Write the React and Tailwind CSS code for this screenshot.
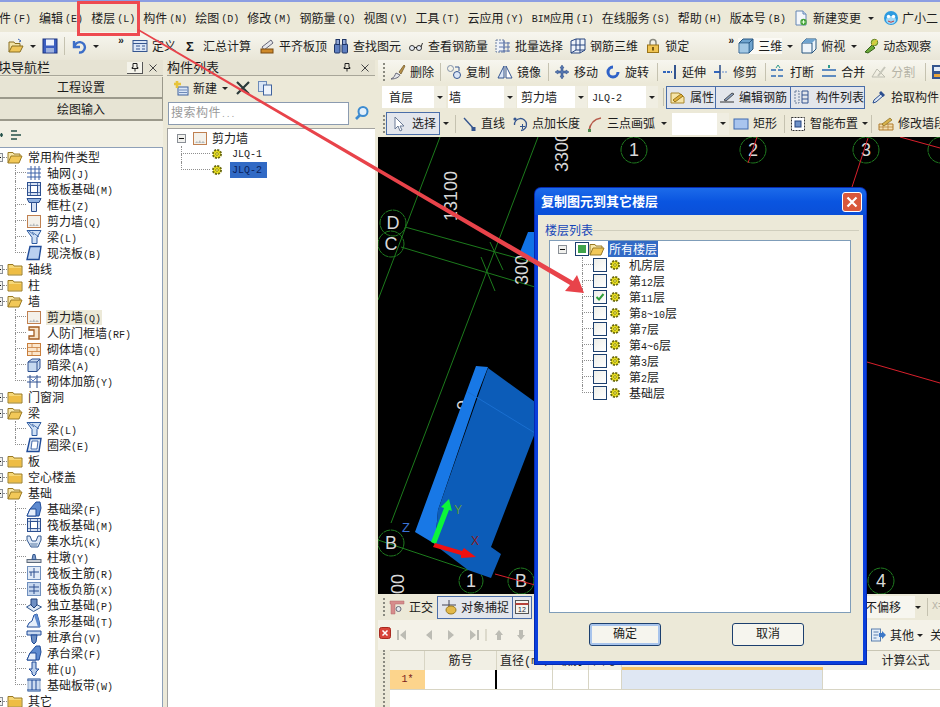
import React from "react";

// splits a label so latin runs get the half width size the screenshot has
function T({ children }) {
  return String(children)
    .split(/([\x00-\x7f]+)/)
    .map((part, i) =>
      /^[\x00-\x7f]+$/.test(part) ? (
        <span key={i} className="text-[10px]">{part}</span>
      ) : (
        part
      )
    );
}

function Ic({ children, w = 16 }) {
  return (
    <svg width={w} height="16" viewBox={`0 0 ${w} 16`} className="shrink-0 block">
      {children}
    </svg>
  );
}

const icons = {
  // tree
  folder: <><path d="M1 5V3.5h5L7 5h8v9H1z" fill="#f6d777" stroke="#9a7a24" /><path d="M2 7h12v6H2z" fill="#eebd45" /></>,
  folderOpen: <><path d="M1 14V3.5h5L7 5h6v2" fill="#f8e7a8" stroke="#9a7a24" /><path d="M1 14l3-7h11l-3 7z" fill="#f2c858" stroke="#9a7a24" /></>,
  gear: <><circle cx="8" cy="8" r="4" fill="#f3e81e" stroke="#6b6a10" strokeWidth="2" strokeDasharray="2 1.1" /><circle cx="8" cy="8" r="1.4" fill="#f7f060" stroke="#5b5a10" strokeWidth="0.6" /></>,
  wall: <><rect x="1.5" y="2.5" width="13" height="12" fill="#f4f1ea" stroke="#c08050" /><path d="M3 13l2-2 1 2 2-3 1 3 2-2 2 2z" fill="#9aa2a8" opacity=".7" /></>,
  grid: <path d="M5 1v14M9 1v14M13 1v14M1 4h14M1 8h14M1 12h14" stroke="#3c62a8" fill="none" />,
  raft: <><rect x="1.5" y="1.5" width="13" height="13" fill="#d5e1f3" stroke="#2c4f8f" /><rect x="4.5" y="4.5" width="7" height="7" fill="#fff" stroke="#2c4f8f" /><path d="M1 4.5h14M1 11.5h14M4.5 1v14M11.5 1v14" stroke="#2c4f8f" strokeWidth=".7" /></>,
  column: <><path d="M1 1.5h14l-2 4H3z" fill="#8fb1e0" stroke="#2c4f8f" /><path d="M5.5 5.5h5v9h-5z" fill="#d5e1f3" stroke="#2c4f8f" /></>,
  beam: <><path d="M1 1.5h14l-4 7v6H6v-6z" fill="#cfe0f5" stroke="#2c5aa0" /><path d="M6 3l7 5M3 2l5 4" stroke="#2c5aa0" strokeWidth=".8" /></>,
  slab: <path d="M4 1.5h11l-2 13H1z" fill="#b9d0f0" stroke="#1f4b98" strokeWidth="1.4" />,
  ring: <><path d="M4 1.5h11l-2 13H1z" fill="#dde8f7" stroke="#1f4b98" strokeWidth="1.4" /><path d="M6 4h6l-1 8H5z" fill="#fff" stroke="#1f4b98" strokeWidth=".8" /></>,
  door: <path d="M3 2h10v12H3v-3h5V5H3z" fill="#f6e3c8" stroke="#a35c20" strokeWidth="1.3" />,
  brick: <><rect x="1.5" y="2.5" width="13" height="12" fill="#fbe6cc" stroke="#c87e3c" /><path d="M1 6.5h14M1 10.5h14M6 2.5v4M11 6.5v4M6 10.5v4" stroke="#c87e3c" strokeWidth=".8" /></>,
  darkBeam: <><path d="M2 5l4-3h8v9l-3 3.5H2z" fill="#c5d8ef" stroke="#2c4f8f" /><path d="M2 5h9v9.5M11 5l3-3" fill="none" stroke="#2c4f8f" /></>,
  rebar: <><path d="M1 4h14M1 9h14M4 2v13M11 2v13" stroke="#2c4f8f" fill="none" /><path d="M5 6l2 2 3-3" stroke="#5a7fc0" fill="none" /></>,
  foundBeam: <><path d="M1 15l3-7 6-7h4l1 6-2 8z" fill="#5e8bd0" stroke="#1f4b98" /><path d="M4 8h6v7H1z" fill="#e5eefa" stroke="#1f4b98" /></>,
  pit: <><path d="M1 3h3l2 5h4l2-5h3v4l-3 7H5L1 7z" fill="#dde8f7" stroke="#33588f" /><path d="M4 10h8l-1 3H5z" fill="#9ab0cc" /></>,
  pier: <><rect x="1" y="10.5" width="14" height="3" fill="#c9ced6" stroke="#5c6a7c" /><path d="M6 10.5l1-5h2l1 5z" fill="#7f9ccb" stroke="#33588f" /></>,
  raftMain: <><rect x="1.5" y="1.5" width="13" height="13" fill="#e2ebf7" stroke="#6f8fbd" /><path d="M8 3v10M3 7h10M5 7v4" stroke="#2c4f8f" fill="none" /></>,
  raftNeg: <><rect x="1.5" y="1.5" width="13" height="13" fill="#c7d8ef" stroke="#6f8fbd" /><path d="M8 3v10M3 6h10M3 10h10" stroke="#2c4f8f" fill="none" /></>,
  isolated: <><path d="M0.5 10l7-4 8 4-8 4.5z" fill="#dfe9f6" stroke="#33588f" /><path d="M5 2h6v6l-3 3-3-3z" fill="#6e8fc3" stroke="#1f3f78" /></>,
  strip: <><path d="M1 14l2-4 3-2 2-6 3-1 2 7 1 6z" fill="#e5eefa" stroke="#1f4b98" /><path d="M8 2l3-1 2 7 1 6h-2l-2-6z" fill="#5e8bd0" /></>,
  cap: <><path d="M1 2h14v4H1z" fill="#c8d8ef" stroke="#1f4b98" /><path d="M5 6h6l-1 7-2 2-2-2z" fill="#6e8fc3" stroke="#1f4b98" /></>,
  pile: <><path d="M6 1h4v7h3l-3 3v2l-2 2-2-2v-2L3 8h3z" fill="#b8cdea" stroke="#1f4b98" /></>,
  band: <><rect x="2" y="1.5" width="12" height="13" fill="#cddcf0" stroke="#8ba4c8" /><path d="M1 3h14M1 13h14M6 3v10M10 3v10" stroke="#1f4b98" /></>,
  // top toolbar
  open: <><path d="M1 14V4h5l1 1.5h5V8" fill="#f2e3a6" stroke="#8a6f20" /><path d="M1 14l3-6h11l-3 6z" fill="#efc65a" stroke="#8a6f20" /><path d="M10 1l3 2-2 1" fill="none" stroke="#3c64b0" /></>,
  save: <><rect x="1" y="1" width="14" height="14" fill="#3d5fc0" stroke="#1d3580" /><rect x="4" y="1.5" width="8" height="6" fill="#eef2fb" /><rect x="4" y="10" width="8" height="4.5" fill="#9fb2de" /></>,
  undo: <path d="M3 3v6h6M3.5 9A5.2 5.2 0 1 1 8 14.5" fill="none" stroke="#3c6ec8" strokeWidth="2.4" />,
  define: <><rect x="1" y="2.5" width="14" height="11" fill="#dbe6f6" stroke="#34558f" /><path d="M1 5.5h14M4 8h4M4 11h4M10 8h3M10 11h3" stroke="#34558f" /></>,
  sigma: <text x="3" y="13" fontSize="13" fontWeight="700" fill="#1a1a1a" fontFamily="Liberation Sans">Σ</text>,
  level: <><path d="M3 9l9-7 2 3-9 7z" fill="#e4e6ea" stroke="#667" /><rect x="2" y="11" width="12" height="4" fill="#cf8a2a" stroke="#7a4a10" /></>,
  binoculars: <><rect x="1.5" y="6" width="5.5" height="9" rx="1" fill="#5f7fc0" stroke="#1f3566" /><rect x="9" y="6" width="5.5" height="9" rx="1" fill="#5f7fc0" stroke="#1f3566" /><rect x="3" y="1.5" width="3.5" height="5" fill="#93a8d6" stroke="#1f3566" /><rect x="9.5" y="1.5" width="3.5" height="5" fill="#93a8d6" stroke="#1f3566" /></>,
  glasses: <><circle cx="4" cy="10" r="2.5" fill="#e8eef8" stroke="#333" /><circle cx="11" cy="10" r="2.5" fill="#e8eef8" stroke="#333" /><path d="M6 9.5h3M13 9l1.5-4" stroke="#333" fill="none" /></>,
  batch: <><path d="M1 2h8v12H1z" fill="#eef2f8" stroke="#6b7fa0" strokeDasharray="2 1" /><path d="M4 5h11M4 9h11M4 13h11M9 2v13M13 4v10" stroke="#5a73a8" fill="none" /></>,
  rebar3d: <><path d="M1 3l5-2h9v11l-5 3H1z" fill="#eef3fa" stroke="#27447f" /><path d="M6 1v11l-5 3M6 12h9M1 7h14M10 1v14" stroke="#27447f" fill="none" /></>,
  lock: <><path d="M5 7V4.5a3 3 0 0 1 6 0V7" fill="none" stroke="#8a8a80" strokeWidth="1.5" /><rect x="2.5" y="7" width="11" height="7.5" fill="#f0c452" stroke="#9a7418" /><rect x="7" y="9" width="2" height="3.5" fill="#7a5a10" /></>,
  cube: <><path d="M1 5l4-4h10v10l-4 4H1z" fill="#6fa4cf" stroke="#27557f" /><path d="M1 5h10v10M11 5l4-4" fill="none" stroke="#27557f" /><path d="M1.5 5.5h9v9h-9z" fill="#a3c8e4" /></>,
  cubeTop: <><path d="M1 5l4-4h10v10l-4 4H1z" fill="#eef5fa" stroke="#27557f" /><path d="M5 1l6 4v10M1 5h10" fill="none" stroke="#27557f" /><path d="M1 5h10l4-4H5z" fill="#6fa4cf" /></>,
  orbit: <><path d="M2 14L9 7l3 3-7 5z" fill="#69a83a" stroke="#36621a" /><circle cx="11.5" cy="4.5" r="3.2" fill="#c0d64a" stroke="#5e7a1c" /><path d="M9 7l5-5" stroke="#e2c33b" strokeWidth="1.4" /></>,
  doc: <><path d="M3 1h7l3 3v11H3z" fill="#f4f7fb" stroke="#6486b4" /><path d="M10 1v3h3" fill="#d4e2f3" stroke="#6486b4" /><circle cx="10.5" cy="12" r="3.2" fill="#46a23a" /><path d="M8.6 12h3.8M10.5 10.1v3.8" stroke="#e6ffe0" /></>,
  mascot: <><circle cx="8" cy="8" r="7" fill="#2d9be0" /><ellipse cx="8" cy="10" rx="5" ry="4" fill="#9fd8f6" /><circle cx="5.5" cy="6.5" r="1.7" fill="#fff" /><circle cx="10.5" cy="6.5" r="1.7" fill="#fff" /><path d="M5 11q3 2.5 6 0" fill="none" stroke="#c23a3a" /></>,
  // component list
  newItem: <><rect x="5" y="7" width="10" height="8" fill="#dae6f6" stroke="#3f629e" /><path d="M6 10h8M6 12.5h8" stroke="#3f629e" strokeWidth=".7" /><path d="M4 1v7M1 4h7" stroke="#e7c43a" strokeWidth="2.6" /></>,
  cross: <path d="M2 2l12 12M14 2L2 14" stroke="#2b3a3a" strokeWidth="2.2" />,
  copyDoc: <><rect x="1.5" y="1.5" width="8" height="10" fill="#d8e4f5" stroke="#6d8bb8" /><rect x="6.5" y="5" width="8" height="10" fill="#eef3fb" stroke="#3f629e" /></>,
  magnify: <><circle cx="9" cy="6.5" r="4.5" fill="#e4f0fb" stroke="#3d8bd0" strokeWidth="2" /><path d="M6 10l-4 4" stroke="#3d8bd0" strokeWidth="2.6" /></>,
  // main toolbars
  brush: <><path d="M9 8l5-7 1 1-4 8z" fill="#b9924a" stroke="#6a5020" strokeWidth=".7" /><path d="M1 15c3-1 4-4 5-6l4 2c-1 2-4 4-9 4z" fill="#e4e6ea" stroke="#667" /></>,
  copyShape: <><circle cx="4.5" cy="4.5" r="3" fill="none" stroke="#7f8fa8" /><circle cx="11" cy="11" r="3.5" fill="#dbe6f6" stroke="#34558f" /><path d="M9 3h4v4" fill="none" stroke="#34558f" /></>,
  mirror: <><path d="M7 2L1 14h6z" fill="#dbe6f6" stroke="#34558f" /><path d="M9 2l6 12H9z" fill="#fff" stroke="#34558f" /></>,
  move: <path d="M8 1l2 3H9v3h3V6l3 2-3 2V9H9v3h1l-2 3-2-3h1V9H4v1L1 8l3-2v1h3V4H6z" fill="#5577b0" stroke="#2c4a80" strokeWidth=".5" />,
  rotate: <path d="M13 8a5 5 0 1 1-5-5" fill="none" stroke="#2f62c8" strokeWidth="3" />,
  extend: <><path d="M1 8h9" stroke="#3366bb" strokeWidth="2" strokeDasharray="3 1" /><path d="M13 1v14" stroke="#34558f" strokeWidth="2" /></>,
  trim: <><path d="M1 8h6" stroke="#3366bb" strokeWidth="2" /><path d="M7 1v14" stroke="#34558f" strokeWidth="1.6" /><path d="M9 8h6" stroke="#a8bcd9" strokeWidth="2" strokeDasharray="2 1" /></>,
  breakIc: <><path d="M1 6h14M1 12h14" stroke="#5e8bc0" strokeWidth="2" strokeDasharray="5 2" /><path d="M8 1l-2 3M8 1l2 3" stroke="#2e9a8c" fill="none" /></>,
  merge: <><path d="M1 6h14M1 12h14" stroke="#5e8bc0" strokeWidth="2" /><path d="M8 1v3" stroke="#2e9a8c" strokeWidth="2" /></>,
  split: <><path d="M1 13h13L6 5z" fill="none" stroke="#bdbdb0" /><path d="M7 12l7-9" stroke="#c6c6ba" strokeWidth="2" /></>,
  tail: <><rect x="1" y="1" width="12" height="14" fill="#34558f" /><rect x="3" y="3" width="8" height="4" fill="#e5edf8" /><rect x="3" y="10" width="8" height="3" fill="#e9a43a" /></>,
  attr: <><path d="M1 4h8l5 4v6H1z" fill="#f6e4a8" stroke="#a8862c" /><path d="M3 11l8-6 2 2-8 6z" fill="#e2b23e" stroke="#97741a" /></>,
  edit: <><path d="M1 13h14" stroke="#333" /><path d="M5 11l8-7 2 1-8 7z" fill="#8aa0c0" stroke="#333" strokeWidth=".8" /></>,
  list: <><rect x="1" y="2" width="4" height="12" fill="none" stroke="#6a7f9c" strokeDasharray="2 1" /><path d="M8 2h6v12H8zM8 6h6M8 10h6" fill="none" stroke="#34558f" /></>,
  picker: <><path d="M2 14l1-3 7-6 2 2-7 6z" fill="#dce7f5" stroke="#2c4f8f" /><path d="M10 2l4 4-2 2-4-4z" fill="#2c4f8f" /></>,
  cursor: <path d="M4 1v12l3-3 2 5 2-1-2-4h4z" fill="#fff" stroke="#6a7a96" />,
  line: <><path d="M3 2l10 11" stroke="#34558f" strokeWidth="1.4" /><rect x="10.5" y="11" width="4" height="4" fill="#34558f" /></>,
  point: <><path d="M2.5 9A6 6 0 1 1 9 14.5" fill="none" stroke="#34558f" strokeWidth="1.3" /><path d="M10.5 8v5M8 10.5h5" stroke="#34558f" /><circle cx="3" cy="3" r="1.6" fill="#34558f" /></>,
  arc: <><path d="M2 15C3 8 7 3 14 2" fill="none" stroke="#b65a4a" strokeWidth="1.6" /><rect x="1" y="13" width="3" height="3" fill="#4e8a4e" /></>,
  rect: <rect x="1" y="3" width="14" height="10" fill="#a9c5ee" stroke="#3f6ab0" />,
  smart: <><rect x="1.5" y="1.5" width="13" height="13" fill="#fff" stroke="#333" strokeDasharray="2 1" /><rect x="5" y="5" width="6" height="6" fill="#6f92c8" stroke="#27447f" /></>,
  modify: <><path d="M1 14V8h14v6z" fill="#f3dfb0" stroke="#b07a2c" /><path d="M1 11h14M5 8v6M10 8v6" stroke="#b07a2c" strokeWidth=".7" /><path d="M4 8l8-6 2 2-8 6z" fill="#d8b24a" stroke="#866a20" strokeWidth=".7" /></>,
  ortho: <><path d="M1 2h14v3H6v10H2V5H1z" fill="#d68c8c" stroke="#b06a6a" strokeWidth=".5" /><circle cx="9.5" cy="10" r="2.5" fill="#e4e8ee" stroke="#667" /></>,
  snap: <><path d="M8 1v14M1 6h14" stroke="#445" /><ellipse cx="10" cy="11" rx="5" ry="4" fill="#e3b94a" stroke="#9a7a20" /></>,
  calendar: <><rect x="1.5" y="1.5" width="13" height="13" fill="#f4f4ee" stroke="#555" /><path d="M1.5 5h13" stroke="#b6423a" strokeWidth="2" /><text x="4" y="13" fontSize="7" fontFamily="Liberation Sans" fill="#223">12</text></>,
  other: <><rect x="1.5" y="2" width="9" height="12" fill="#e4edf8" stroke="#5a7fae" /><path d="M3.5 5h5M3.5 8h5M3.5 11h3" stroke="#5a7fae" /><path d="M9 6h3V4l4 4-4 4v-2H9z" fill="#3c78c8" /></>,
};

function Icon({ name }) {
  return <Ic>{icons[name]}</Ic>;
}

function Caret({ className = "" }) {
  return <span className={`shrink-0 w-0 h-0 border-x-[3px] border-x-transparent border-t-[3px] border-t-[#222] ${className}`} />;
}

function Sep({ className = "" }) {
  return <span className={`shrink-0 w-px h-[18px] bg-[#c5c2b0] ${className}`} />;
}

function Grip({ className = "" }) {
  return <span className={`shrink-0 w-[2px] h-[18px] border-l-2 border-dotted border-[#8a8a80] ${className}`} />;
}

// Noto sits high in its line box, the padding brings the text down to the icons
function Tool({ icon, label, className = "", gray = false }) {
  return (
    <div className={`shrink-0 flex items-center gap-[4px] whitespace-nowrap ${gray ? "text-[#b5b3a6]" : ""} ${className}`}>
      <Icon name={icon} />
      <span className="pt-[3px]">{label}</span>
    </div>
  );
}

function Combo({ label, className = "", textClass = "pl-[3px]", body = "w-[52px]" }) {
  return (
    <div className={`shrink-0 flex h-[22px] items-stretch ${className}`}>
      <div className={`flex items-center pt-[3px] bg-white ${body} ${textClass}`}><T>{label}</T></div>
      <div className="w-[12px] flex items-center justify-center bg-[#f0eee2]"><Caret /></div>
    </div>
  );
}

function Chevrons({ className = "" }) {
  return <span className={`shrink-0 text-[10px] font-bold tracking-[-1px] text-[#222] -mt-[8px] ${className}`}>»</span>;
}

const menus = [
  ["件", "F"], ["编辑", "E"], ["楼层", "L"], ["构件", "N"], ["绘图", "D"], ["修改", "M"], ["钢筋量", "Q"],
  ["视图", "V"], ["工具", "T"], ["云应用", "Y"], ["BIM应用", "I"], ["在线服务", "S"], ["帮助", "H"], ["版本号", "B"],
];

function MenuBar() {
  return (
    <div className="h-[30px] flex items-center pt-[2px] whitespace-nowrap overflow-hidden bg-[#ece9d8]">
      <div className="-ml-[1px]" />
      {menus.map(([name, key]) => (
        <div key={name} className="flex items-center shrink-0 pr-[8px] pt-[3px]">
          <T>{name}</T>
          <span className="ml-[2px] text-[10px]">({key})</span>
        </div>
      ))}
      <Tool icon="doc" label="新建变更" className="-ml-[1px]" />
      <Caret className="ml-[7px]" />
      <Tool icon="mascot" label="广小二" className="ml-[9px] !gap-[3px]" />
    </div>
  );
}

function TopToolbar() {
  return (
    <div className="h-[28px] flex items-center overflow-hidden pl-[8px] bg-linear-to-b from-[#f7f6ef] to-[#e9e6d7]">
      <Icon name="open" />
      <Caret className="ml-[6px]" />
      <div className="ml-[6px]"><Icon name="save" /></div>
      <Sep className="ml-[6px]" />
      <div className="ml-[6px]"><Icon name="undo" /></div>
      <Caret className="ml-[6px]" />
      <Chevrons className="ml-[19px]" />
      <Tool icon="define" label="定义" className="ml-[9px]" />
      <Tool icon="sigma" label="汇总计算" className="ml-[7px]" />
      <Tool icon="level" label="平齐板顶" className="ml-[8px]" />
      <Tool icon="binoculars" label="查找图元" className="ml-[6px]" />
      <Tool icon="glasses" label="查看钢筋量" className="ml-[7px]" />
      <Tool icon="batch" label="批量选择" className="ml-[7px]" />
      <Tool icon="rebar3d" label="钢筋三维" className="ml-[7px]" />
      <Tool icon="lock" label="锁定" className="ml-[7px]" />
      <Chevrons className="ml-[39px]" />
      <Tool icon="cube" label="三维" className="ml-[5px] bg-[#fbfaf5]" />
      <Caret className="ml-[5px]" />
      <Tool icon="cubeTop" label="俯视" className="ml-[8px]" />
      <Caret className="ml-[6px]" />
      <Tool icon="orbit" label="动态观察" className="ml-[6px]" />
    </div>
  );
}

function PanelHeader({ title, boxed, className = "" }) {
  return (
    <div className={`h-[16px] flex items-center justify-between border-b border-[#a8a699] bg-[#e6e3d3] whitespace-nowrap ${className}`}>
      <span className="text-[13px] pt-[2px]">{title}</span>
      <div className="flex items-center">
        <span className={`w-[16px] h-[12px] flex items-center justify-center ${boxed ? "bg-[#f4f3ea] border-b border-r border-[#555]" : ""}`}>
          <svg width="8" height="9" viewBox="0 0 8 9"><path d="M2 0.5h4v4h1v1H1v-1h1zM4 5.5v3" fill="none" stroke="#222" /></svg>
        </span>
        <span className="w-[20px] flex justify-center">
          <svg width="8" height="8" viewBox="0 0 8 8"><path d="M0.5 0.5l7 7M7.5 0.5l-7 7" stroke="#444" /></svg>
        </span>
      </div>
    </div>
  );
}

function Expander({ open, className = "" }) {
  return (
    <svg width="9" height="9" viewBox="0 0 9 9" className={`shrink-0 ${className}`}>
      <rect x="0.5" y="0.5" width="8" height="8" fill="#f1f1ee" stroke="#8a8f96" />
      <path d={open ? "M2 4.5h5" : "M2 4.5h5M4.5 2v5"} stroke="#111" />
    </svg>
  );
}

// dotted tree connector, one row high
function Twig({ last, className = "w-[11px]" }) {
  return (
    <div className={`shrink-0 h-[16px] ${className}`}>
      <div className="h-[8px] border-l border-b border-dotted border-[#8f8f8f]" />
      {!last && <div className="h-[8px] border-l border-dotted border-[#8f8f8f]" />}
    </div>
  );
}

const navTree = [
  { name: "常用构件类型", open: true, kids: [["grid", "轴网(J)"], ["raft", "筏板基础(M)"], ["column", "框柱(Z)"], ["wall", "剪力墙(Q)"], ["beam", "梁(L)"], ["slab", "现浇板(B)"]] },
  { name: "轴线" },
  { name: "柱" },
  { name: "墙", open: true, kids: [["wall", "剪力墙(Q)", true], ["door", "人防门框墙(RF)"], ["brick", "砌体墙(Q)"], ["darkBeam", "暗梁(A)"], ["rebar", "砌体加筋(Y)"]] },
  { name: "门窗洞" },
  { name: "梁", open: true, kids: [["beam", "梁(L)"], ["ring", "圈梁(E)"]] },
  { name: "板" },
  { name: "空心楼盖" },
  { name: "基础", open: true, kids: [["foundBeam", "基础梁(F)"], ["raft", "筏板基础(M)"], ["pit", "集水坑(K)"], ["pier", "柱墩(Y)"], ["raftMain", "筏板主筋(R)"], ["raftNeg", "筏板负筋(X)"], ["isolated", "独立基础(P)"], ["strip", "条形基础(T)"], ["cap", "桩承台(V)"], ["foundBeam", "承台梁(F)"], ["pile", "桩(U)"], ["band", "基础板带(W)"]] },
  { name: "其它" },
];

function LeftNav() {
  return (
    <div className="w-[163px] shrink-0 flex flex-col overflow-hidden">
      <PanelHeader title="块导航栏" boxed className="-ml-[2px] pr-[0px]" />
      <div className="mt-[1px] h-[22px] flex items-center justify-center pt-[4px] bg-[#e7e4d4] border-b-2 border-r border-[#9b998b]">工程设置</div>
      <div className="h-[22px] flex items-center justify-center pt-[4px] bg-[#e7e4d4] border-b-2 border-r border-[#9b998b]">绘图输入</div>
      <div className="h-[26px] flex items-center gap-[3px] pl-0 bg-[#f1efe3]">
        <svg width="30" height="10" viewBox="0 0 30 10" className="mt-[2px]">
          <path d="M0 5h3M1.5 3v4" stroke="#24524a" strokeWidth="1.4" />
          <path d="M11 1h6M11 5h10M11 9h6" stroke="#24524a" strokeWidth="1.4" />
        </svg>
      </div>
      <div className="flex-1 bg-white border-t border-r border-[#8ea0b8] pt-[1px] overflow-hidden">
        {navTree.map((group) => (
          <div key={group.name}>
            <div className="h-[16px] flex items-center">
              <Expander open={group.open} className="-ml-[6px]" />
              <span className="w-[4px] border-b border-dotted border-[#8f8f8f]" />
              <Icon name={group.open ? "folderOpen" : "folder"} />
              <span className="ml-[5px] pt-[3px] whitespace-nowrap"><T>{group.name}</T></span>
            </div>
            {group.kids?.map(([icon, label, hot], i) => (
              <div key={label + i} className="h-[16px] flex items-center pl-[15px]">
                <Twig last={i === group.kids.length - 1} />
                <Icon name={icon} />
                <span className={`ml-[4px] px-[1px] pt-[3px] whitespace-nowrap ${hot ? "bg-[#ece9d8]" : ""}`}><T>{label}</T></span>
              </div>
            ))}
          </div>
        ))}
      </div>
    </div>
  );
}

function ComponentList() {
  return (
    <div className="w-[208px] ml-[4px] shrink-0 flex flex-col">
      <PanelHeader title="构件列表" />
      <div className="h-[24px] flex items-center pl-[6px] bg-[#ece9d8]">
        <Tool icon="newItem" label="新建" />
        <Caret className="ml-[5px]" />
        <div className="ml-[7px]"><Icon name="cross" /></div>
        <div className="ml-[6px]"><Icon name="copyDoc" /></div>
      </div>
      <div className="h-[26px] flex items-center pl-[1px] bg-[#ece9d8]">
        <div className="w-[181px] h-[23px] bg-white border border-[#8b9bb0] pl-[2px] pt-[2px] flex items-center text-[#9a9a9a] text-[12px] tracking-[0.5px]"><span>搜索构件<span className="text-[8px] tracking-[0px]">...</span></span></div>
        <div className="ml-[5px]"><Icon name="magnify" /></div>
      </div>
      <div className="flex-1 mt-[2px] bg-white border-l border-t border-[#a3a3a0] pt-[1px]">
        <div className="h-[16px] flex items-center pl-[9px]">
          <Expander open />
          <span className="w-[6px] ml-0" />
          <Icon name="wall" />
          <span className="ml-[4px] pt-[3px]">剪力墙</span>
        </div>
        {["JLQ-1", "JLQ-2"].map((name, i) => (
          <div key={name} className="h-[16px] flex items-center pl-[13px]">
            <Twig last={i === 1} className="w-[29px]" />
            <div className="-ml-[1px]"><Icon name="gear" /></div>
            <span className={`ml-[5px] w-[37px] pl-[2px] pt-[2px] h-[16px] flex items-center text-[10px] ${i === 1 ? "bg-[#316ac5] text-[#0a1f5c]" : ""}`}>{name}</span>
          </div>
        ))}
      </div>
    </div>
  );
}

function Toggled({ icon, label, className = "" }) {
  return (
    <div className={`shrink-0 flex items-center h-[23px] bg-[#e3e6ec] border border-[#4a6ea9] whitespace-nowrap ${className}`}>
      <Icon name={icon} />
      {label && <span className="pt-[3px]">{label}</span>}
    </div>
  );
}

function MainToolbars() {
  return (
    <>
      <div className="h-[24px] flex items-center overflow-hidden bg-linear-to-b from-[#f7f6ef] to-[#ece9d8]">
        <Grip className="ml-[5px]" />
        <Tool icon="brush" label="删除" className="ml-[5px]" />
        <Sep className="ml-[6px]" />
        <Tool icon="copyShape" label="复制" className="ml-[5px]" />
        <Tool icon="mirror" label="镜像" className="ml-[7px]" />
        <Sep className="ml-[7px]" />
        <Tool icon="move" label="移动" className="ml-[5px]" />
        <Tool icon="rotate" label="旋转" className="ml-[7px]" />
        <Sep className="ml-[8px]" />
        <Tool icon="extend" label="延伸" className="ml-[4px]" />
        <Tool icon="trim" label="修剪" className="ml-[7px]" />
        <Sep className="ml-[8px]" />
        <Tool icon="breakIc" label="打断" className="ml-[4px]" />
        <Tool icon="merge" label="合并" className="ml-[7px]" />
        <Tool icon="split" label="分割" gray className="ml-[6px]" />
        <Sep className="ml-[10px]" />
        <div className="ml-[5px]"><Icon name="tail" /></div>
      </div>
      <div className="h-[26px] flex items-center overflow-hidden bg-[#ece9d8]">
        <Combo label="首层" className="ml-[4px]" textClass="pl-[7px]" />
        <Combo label="墙" className="ml-[2px]" textClass="pl-[1px]" body="w-[56px]" />
        <Combo label="剪力墙" className="ml-[1px]" textClass="pl-[4px]" body="w-[58px]" />
        <Combo label="JLQ-2" className="ml-[1px]" textClass="pl-[4px]" body="w-[58px]" />
        <Sep className="ml-[5px]" />
        <div className="ml-[2px] flex">
          <Toggled icon="attr" label="属性" className="w-[50px] pl-[3px] gap-[4px]" />
          <Toggled icon="edit" label="编辑钢筋" className="w-[76px] pl-[3px] gap-[4px] -ml-px" />
          <Toggled icon="list" label="构件列表" className="w-[75px] pl-[3px] gap-[6px] -ml-px" />
        </div>
        <Tool icon="picker" label="拾取构件" className="ml-[6px]" />
      </div>
      <div className="h-[27px] flex items-center overflow-hidden bg-[#ece9d8]">
        <Grip className="ml-[5px]" />
        <Toggled icon="cursor" label="选择" className="ml-[1px] w-[54px] pl-[4px] gap-[5px]" />
        <Caret className="ml-[3px]" />
        <Sep className="ml-[6px]" />
        <Tool icon="line" label="直线" className="ml-[5px]" />
        <Tool icon="point" label="点加长度" className="ml-[7px]" />
        <Tool icon="arc" label="三点画弧" className="ml-[7px]" />
        <Caret className="ml-[6px]" />
        <Combo label="" className="ml-[5px]" body="w-[45px]" />
        <Tool icon="rect" label="矩形" className="ml-[4px]" />
        <Sep className="ml-[7px]" />
        <Tool icon="smart" label="智能布置" className="ml-[5px]" />
        <Caret className="ml-[4px]" />
        <Sep className="ml-[3px]" />
        <Tool icon="modify" label="修改墙段" className="ml-[6px]" />
      </div>
    </>
  );
}

function Axis({ x, y, r = 13, label, fs = 18 }) {
  return (
    <g>
      <circle cx={x} cy={y} r={r} fill="none" stroke="#1f7a1f" strokeDasharray="7 0.6" />
      <text x={x} y={y + fs * 0.36} textAnchor="middle" fontSize={fs} fill="#d8d8d8" fontFamily="Liberation Sans">{label}</text>
    </g>
  );
}

function Dim({ x, y, label, fs = 18 }) {
  return (
    <text transform={`translate(${x} ${y}) rotate(-90)`} fontSize={fs} fill="#d8d8d8" fontFamily="Liberation Sans">{label}</text>
  );
}

function Canvas() {
  const green = "#1c7a1c";
  const red = "#d8202c";
  return (
    <svg className="block w-[562px] h-[457px] bg-black shrink-0" viewBox="378 137 562 457">
      <g stroke={green} fill="none">
        <path d="M440 137L378 300" />
        <path d="M538 137L391 523" />
        <path d="M405 227L535 263" />
        <path d="M401 247L535 287" />
        <path d="M490 242L503 270M481 257L495 291" />
        <path d="M378 540L468 570" />
      </g>
      <Axis x={393} y={223} label="D" />
      <Axis x={391} y={244} label="C" />
      <Axis x={391} y={543} label="B" />
      <Axis x={634} y={150} label="1" />
      <Axis x={753} y={150} label="2" />
      <Axis x={866} y={150} label="3" />
      <Axis x={941} y={150} label="" />
      <Axis x={471} y={581} r={12} label="1" />
      <Axis x={521} y={581} label="B" />
      <Axis x={881} y={581} label="4" />
      <Dim x={457} y={221} label="13100" />
      <Dim x={568} y={172} label="3300" />
      <Dim x={528} y={285} label="300" />
      <Dim x={404} y={594} label="00" />
      <g stroke={red} fill="none">
        <path d="M757 137L748 163M868 138L852 187M900 137L940 148M867 362L940 383M495 574L535 585" />
      </g>
      <text transform="translate(470 410) rotate(-90)" fontSize="18" fill="#d8d8d8" fontFamily="Liberation Sans">9</text>
      <path d="M520 252L528 232L535 232V265Z" fill="#1173e6" />
      <path d="M488 368L535 402V433L491 547L501 554L491 578L468 570L435 545L438 510Z" fill="#0c5cb8" />
      <path d="M476 366L488 367L478 393L438 510L435 544L415 532Z" fill="#1878e6" />
      <path d="M468 392L535 433" stroke="#1a6fd0" fill="none" />
      <path d="M431 542L444 508L441 507L449 499L452 511L449 510L436 544Z" fill="#0bf53a" />
      <path d="M435 543L462 551L464 548L476 557L461 558L461 555L433 547Z" fill="#f01010" />
      <text x="458" y="514" fontSize="12" fill="#5f9c3a" fontFamily="Liberation Sans" textAnchor="middle">Y</text>
      <text x="406" y="532" fontSize="13" fill="#3a72d4" fontFamily="Liberation Sans" textAnchor="middle">Z</text>
      <text x="475" y="545" fontSize="12" fill="#8a1a20" fontFamily="Liberation Sans" textAnchor="middle">X</text>
    </svg>
  );
}

function BottomBars() {
  return (
    <>
      <div className="h-[26px] flex items-center overflow-hidden bg-[#ece9d8]">
        <Grip className="ml-[5px]" />
        <Tool icon="ortho" label="正交" className="ml-[4px]" />
        <Toggled icon="snap" label="对象捕捉" className="ml-[4px] w-[76px] pl-[3px] gap-[4px]" />
        <Toggled icon="calendar" className="w-[20px] -ml-px pl-[1px]" />
        <div className="ml-[333px] w-[50px] h-[22px] flex items-center pt-[3px] bg-[#f7f6ef] shrink-0">不偏移</div>
        <Caret className="ml-[0px]" />
        <Sep className="ml-[6px]" />
        <span className="ml-[4px] text-[10px] text-[#b5b3a6]">X=</span>
      </div>
      <div className="h-[30px] flex items-center overflow-hidden bg-[#f4f2e8] relative">
        <svg width="12" height="12" viewBox="0 0 12 12" className="shrink-0 ml-[1px] -mt-[5px]">
          <rect x="0.5" y="0.5" width="11" height="11" rx="2" fill="#d8443a" stroke="#a8291f" />
          <path d="M3.5 3.5l5 5M8.5 3.5l-5 5" stroke="#fff" strokeWidth="1.5" />
        </svg>
        <svg width="140" height="12" viewBox="0 0 140 12" className="shrink-0 ml-[5px]" fill="#bcbcb4">
          <path d="M1 1h2v10H1zM10 1v10L4 6zM36 1v10l-6-5zM52 1l6 5-6 5zM74 1l6 5-6 5zM81 1h2v10h-2z" />
          <path d="M90 0v12" stroke="#c5c2b0" />
          <path d="M103 1l4 5h-2v5h-4V6h-2zM125 11l4-5h-2V1h-4v5h-2z" />
        </svg>
        <Tool icon="other" label="其他" className="ml-[334px]" />
        <Caret className="ml-[3px]" />
        <span className="ml-[7px] pt-[3px] shrink-0">关</span>
      </div>
      <div className="flex-1 flex overflow-hidden bg-[#ece9d8]">
        <div className="w-[12px] shrink-0 flex justify-center"><Grip className="!h-full -ml-[1px]" /></div>
        <div className="flex-1 bg-white overflow-hidden">
          <div className="h-[20px] flex bg-[#f1efe4] border-t border-[#c9c6b4]">
            <div className="w-[35px] shrink-0 border-r border-[#d8d5c4]" />
            <div className="w-[72px] shrink-0 flex items-center justify-center pt-[2px] border-r border-[#d8d5c4]">筋号</div>
            <div className="w-[56px] shrink-0 flex items-center pl-[3px] pt-[2px] whitespace-nowrap overflow-hidden border-r border-[#d8d5c4]">直径(<T>mm)</T></div>
            <div className="w-[36px] shrink-0 flex items-center justify-center pt-[2px] border-r border-[#d8d5c4]">级别</div>
            <div className="w-[33px] shrink-0 flex items-center justify-center pt-[2px] border-r border-[#d8d5c4]">图号</div>
            <div className="w-[201px] shrink-0 flex items-center justify-center border-b-[3px] border-[#f6c56a]">图形</div>
            <div className="w-[165px] shrink-0 flex items-center justify-center pt-[2px]">计算公式</div>
          </div>
          <div className="h-[20px] flex border-b border-[#d8d5c4]">
            <div className="w-[35px] flex items-center justify-center bg-[#fcd48c] text-[#7a1c1c] text-[10px]">1*</div>
            <div className="w-[72px] border-r-2 border-black" />
            <div className="w-[56px] border-r border-[#d8d5c4]" />
            <div className="w-[36px] border-r border-[#d8d5c4]" />
            <div className="w-[33px] border-r border-[#d8d5c4]" />
            <div className="w-[201px] bg-[#dfe7f3] border-r border-[#d8d5c4]" />
          </div>
        </div>
      </div>
    </>
  );
}

const floors = ["机房层", "第12层", "第11层", "第8~10层", "第7层", "第4~6层", "第3层", "第2层", "基础层"];

function Dialog() {
  return (
    <div className="absolute left-[535px] top-[188px] w-[331px] h-[476px] flex flex-col rounded-t-[6px] bg-[#0a3fdc] shadow-[0_0_0_1px_#062ab0]">
      <div className="h-[27px] shrink-0 flex items-center justify-between pl-[6px] pr-[4px] rounded-t-[6px] bg-linear-to-b from-[#1c6bea] via-[#0a55e0] to-[#0a4fd8]">
        <span className="text-white text-[13px] font-bold pt-[2px] whitespace-nowrap">复制图元到其它楼层</span>
        <div className="w-[20px] h-[20px] rounded-[3px] border border-white bg-[#d9583c] flex items-center justify-center">
          <svg width="12" height="12" viewBox="0 0 12 12"><path d="M1.5 1.5l9 9M10.5 1.5l-9 9" stroke="#fff" strokeWidth="2.2" /></svg>
        </div>
      </div>
      <div className="flex-1 mx-[3px] mb-[3px] bg-[#ece9d8] flex flex-col pl-[11px] pr-[12px] pt-[8px]">
        <div className="h-[14px] -ml-[4px] -mr-[8px] flex items-center gap-0">
          <span className="text-[#1646b8] text-[12px] pt-[3px] whitespace-nowrap">楼层列表</span>
          <span className="flex-1 h-px bg-[#d0cebd]" />
        </div>
        <div className="mt-[3px] h-[373px] bg-white border border-[#7f9db9]">
          <div className="h-[16px] flex items-center pl-[8px]">
            <Expander open />
            <div className="ml-[8px] w-[14px] h-[14px] border border-[#1c3f6e] flex items-center justify-center bg-white shrink-0">
              <span className="w-[8px] h-[8px] bg-[#3fa34a]" />
            </div>
            <Icon name="folderOpen" />
            <span className="ml-[3px] px-[1px] pt-[3px] h-[16px] flex items-center bg-[#316ac5] text-white">所有楼层</span>
          </div>
          {floors.map((floor, i) => (
            <div key={floor} className="h-[16px] flex items-center pl-[32px]">
              <Twig last={i === floors.length - 1} />
              <div className="w-[14px] h-[14px] border border-[#1c3f6e] bg-linear-to-br from-[#eeeee8] to-white flex items-center justify-center shrink-0">
                {floor === "第11层" && (
                  <svg width="10" height="10" viewBox="0 0 10 10"><path d="M1.5 5l2.5 2.5L8.5 2" fill="none" stroke="#2f9e3a" strokeWidth="2" /></svg>
                )}
              </div>
              <Icon name="gear" />
              <span className="ml-[6px] pt-[3px] whitespace-nowrap"><T>{floor}</T></span>
            </div>
          ))}
        </div>
        <div className="mt-[10px] flex pl-[40px] gap-[71px]">
          <button className="w-[72px] h-[23px] rounded-[3px] border border-[#1c3f6e] bg-[#f6f5ee] shadow-[inset_0_0_0_2px_#a8c4ec]">确定</button>
          <button className="w-[72px] h-[23px] rounded-[3px] border border-[#1c3f6e] bg-[#f6f5ee]">取消</button>
        </div>
      </div>
    </div>
  );
}

// the red callout someone drew over the screenshot
function Callout() {
  return (
    <svg className="absolute inset-0 pointer-events-none" width="940" height="707" viewBox="0 0 940 707">
      <rect x="78.5" y="2.5" width="60" height="32" fill="none" stroke="#ee4a50" strokeWidth="3" />
      <path d="M137 30L138.5 29L573 281L577 275L584 293L565 291L570 285Z" fill="#e8434a" />
    </svg>
  );
}

export default function App() {
  return (
    <div className="relative w-[940px] h-[707px] overflow-hidden bg-[#ece9d8] text-[12px] leading-none text-[#1c1c1c] font-['Liberation_Mono','Noto_Sans_CJK_SC',monospace]">
      <div className="h-[2px] bg-[#8c9ee2]" />
      <MenuBar />
      <TopToolbar />
      <div className="h-[647px] flex">
        <LeftNav />
        <ComponentList />
        <div className="w-[562px] ml-[3px] shrink-0 flex flex-col">
          <MainToolbars />
          <Canvas />
          <BottomBars />
        </div>
      </div>
      <Dialog />
      <Callout />
    </div>
  );
}
